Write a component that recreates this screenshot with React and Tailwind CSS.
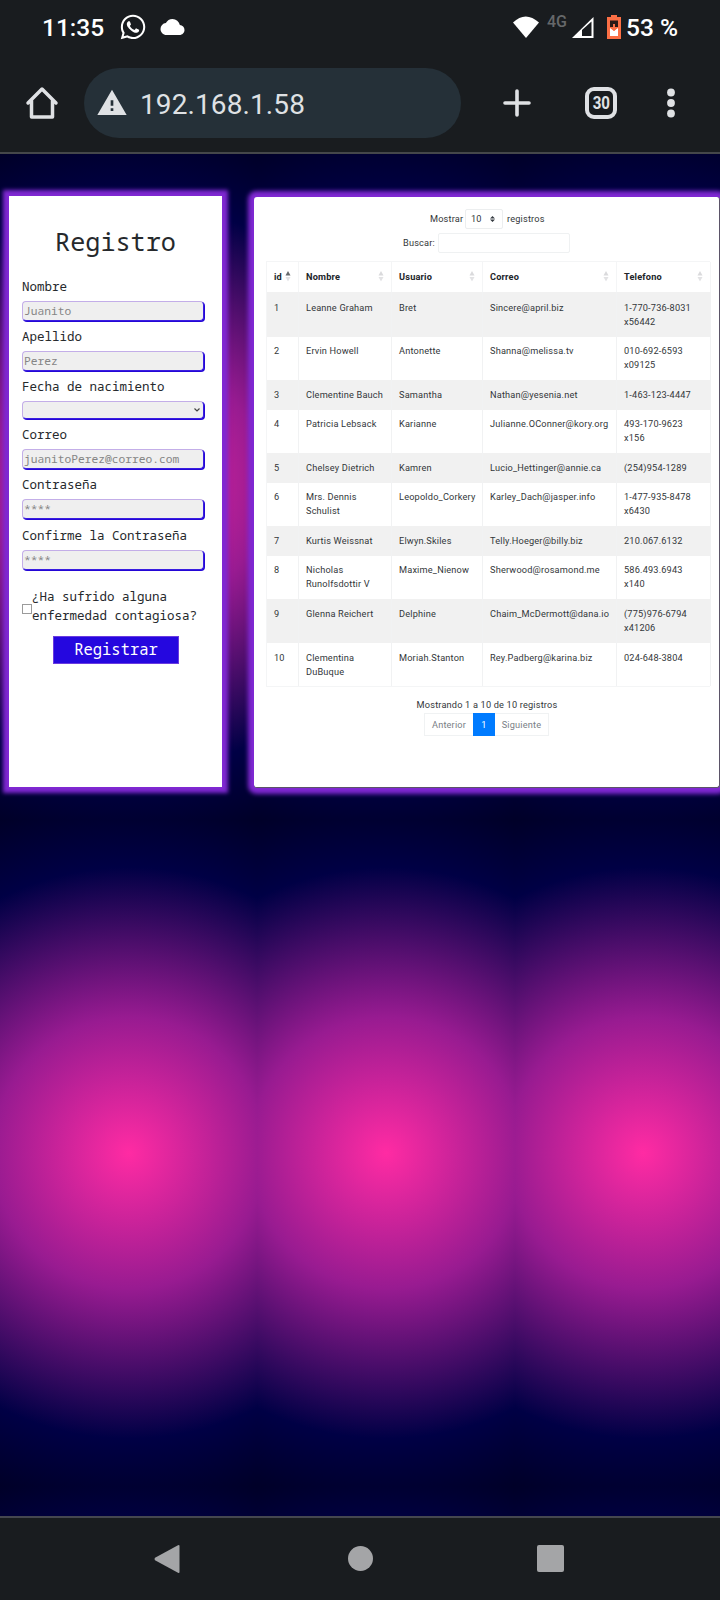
import React from "react";
import { FaWhatsapp } from "react-icons/fa";
import { MdCloud, MdWarning } from "react-icons/md";

const MONO = "font-['Noto_Sans_Mono','DejaVu_Sans_Mono',monospace]";

const rows = [
  { h: "h-[45px] pt-[9px]", c: ["1", "Leanne Graham", "Bret", "Sincere@april.biz", "1-770-736-8031 x56442"] },
  { h: "h-[43px] pt-[7px]", c: ["2", "Ervin Howell", "Antonette", "Shanna@melissa.tv", "010-692-6593 x09125"] },
  { h: "h-[30px] pt-[8px]", c: ["3", "Clementine Bauch", "Samantha", "Nathan@yesenia.net", "1-463-123-4447"] },
  { h: "h-[43px] pt-[7px]", c: ["4", "Patricia Lebsack", "Karianne", "Julianne.OConner@kory.org", "493-170-9623 x156"] },
  { h: "h-[30px] pt-[8px]", c: ["5", "Chelsey Dietrich", "Kamren", "Lucio_Hettinger@annie.ca", "(254)954-1289"] },
  { h: "h-[43px] pt-[7px]", c: ["6", "Mrs. Dennis Schulist", "Leopoldo_Corkery", "Karley_Dach@jasper.info", "1-477-935-8478 x6430"] },
  { h: "h-[30px] pt-[8px]", c: ["7", "Kurtis Weissnat", "Elwyn.Skiles", "Telly.Hoeger@billy.biz", "210.067.6132"] },
  { h: "h-[43px] pt-[7px]", c: ["8", "Nicholas Runolfsdottir V", "Maxime_Nienow", "Sherwood@rosamond.me", "586.493.6943 x140"] },
  { h: "h-[44px] pt-[8px]", c: ["9", "Glenna Reichert", "Delphine", "Chaim_McDermott@dana.io", "(775)976-6794 x41206"] },
  { h: "h-[43px] pt-[8px]", c: ["10", "Clementina DuBuque", "Moriah.Stanton", "Rey.Padberg@karina.biz", "024-648-3804"] },
];

const GRID = "grid grid-cols-[32px_93px_91px_134px_94px]";

function StatusBar() {
  return (
    <div className="flex h-[54px] items-center pl-[42px] text-white">
      <span className="mt-[2px] w-[63px] text-[24.5px] leading-none font-medium whitespace-nowrap">11:35</span>
      <FaWhatsapp className="ml-[14px] h-[28px] w-[28px]" />
      <MdCloud className="ml-[13px] h-[24px] w-[25px]" />
      <svg className="ml-[327px] h-[22px] w-[28px]" viewBox="0 0 28 22">
        <path d="M1 6.500Q13.500-5.500 27 6.500L14 22Z" fill="#fff" />
      </svg>
      <span className="mb-[10px] ml-[7px] w-[23px] text-[16px] leading-none font-medium text-[#66686a]">4G</span>
      <svg className="ml-[1px] h-[23px] w-[24px]" viewBox="0 0 24 23">
        <path d="M1 22L22.500 1V22Z" fill="#fff" />
        <path d="M11 14L20.500 5.500V20H11Z" fill="#191c1f" />
      </svg>
      <svg className="ml-[12px] h-[24px] w-[14px]" viewBox="0 0 14 24">
        <path d="M4 0h6v2h4v22H0V2h4z" fill="#fb6f45" />
        <path d="M3 5.500h8V12H3z" fill="#2a1a16" />
        <path d="M3 13l4 3 4-3v8H3z" fill="#fff" />
        <path d="M6 9h2v3h2.500L7 16l-3.500-4H6z" fill="#fb6f45" />
      </svg>
      <span className="mt-[2px] ml-[5px] text-[24.5px] leading-none font-medium whitespace-nowrap">53 %</span>
    </div>
  );
}

function AddressBar() {
  return (
    <div className="flex h-[98px] items-center text-[#dfe1e4]">
      <svg className="ml-[25px] h-[34px] w-[34px]" viewBox="0 0 34 34" fill="none" stroke="currentColor" strokeWidth="3.500" strokeLinejoin="round" strokeLinecap="round">
        <path d="M3 17L17 3L31 17M6.500 14.500V31H27.500V14.500" />
      </svg>
      <div className="ml-[25px] flex h-[70px] w-[377px] items-center rounded-full bg-[#253038] pl-[12px]">
        <MdWarning className="h-[32px] w-[32px]" />
        <span className="mt-[3px] ml-[12px] text-[28px] leading-none tracking-[0.1px]">192.168.1.58</span>
      </div>
      <svg className="ml-[42px] h-[28px] w-[28px]" viewBox="0 0 28 28" stroke="currentColor" strokeWidth="3.600" strokeLinecap="round">
        <path d="M14 2V26M2 14H26" />
      </svg>
      <div className="ml-[54px] flex h-[32px] w-[32px] items-center justify-center rounded-[9px] border-[4px] border-[#dfe1e4] text-[18px] leading-none font-bold">
        <span className="scale-x-[0.84]">30</span>
      </div>
      <svg className="ml-[50px] h-[30px] w-[8px]" viewBox="0 0 8 30" fill="currentColor">
        <circle cx="4" cy="4.500" r="3.900" />
        <circle cx="4" cy="15" r="3.900" />
        <circle cx="4" cy="25.500" r="3.900" />
      </svg>
    </div>
  );
}

function Field({ label, placeholder, select, gap }) {
  return (
    <div className={gap}>
      <div className="h-[20px] text-[12.5px] leading-[20px] whitespace-nowrap">{label}</div>
      <div
        className={
          "mt-[4px] flex w-[182px] items-center justify-between rounded-[4px] border border-[#c3aee8] bg-[#efefef] pl-[1px] text-[11.250px] leading-none text-[#858585] shadow-[1px_1px_0_0_#2407d6] border-r-[#3a1ee0] border-b-[#3a1ee0] " +
          (select ? "h-[18px]" : "h-[20px]")
        }
      >
        <span>{placeholder}</span>
        {select && (
          <svg className="mr-[3px] h-[4px] w-[6px]" viewBox="0 0 6 4" fill="none" stroke="#444" strokeWidth="1.200">
            <path d="M0.500 0.500L3 3L5.500 0.500" />
          </svg>
        )}
      </div>
    </div>
  );
}

function Registration() {
  return (
    <section className={"h-[591px] w-[213px] shrink-0 bg-white px-[13px] text-[#26292c] shadow-[0_0_4px_6px_#7f28d2] " + MONO}>
      <h1 className="mt-[29px] h-[33px] text-center text-[25.200px] leading-[32px]">Registro</h1>
      <Field label="Nombre" placeholder="Juanito" gap="mt-[19px]" />
      <Field label="Apellido" placeholder="Perez" gap="mt-[6px]" />
      <Field label="Fecha de nacimiento" placeholder="" select gap="mt-[6px]" />
      <Field label="Correo" placeholder="juanitoPerez@correo.com" gap="mt-[6px]" />
      <Field label="Contraseña" placeholder="****" gap="mt-[6px]" />
      <Field label="Confirme la Contraseña" placeholder="****" gap="mt-[7px]" />
      <div className="mt-[17px] flex items-center">
        <span className="mt-[5px] h-[10px] w-[10px] shrink-0 border border-[#9b9b9b]" />
        <span className="text-[12.5px] leading-[19px] whitespace-nowrap">
          ¿Ha sufrido alguna
          <br />
          enfermedad contagiosa?
        </span>
      </div>
      <button className="mt-[11px] ml-[31px] block h-[28px] w-[126px] border border-[#6a3be0] bg-[#2507df] pb-[2px] text-[15.500px] leading-[24px] text-white">
        Registrar
      </button>
    </section>
  );
}

function Sort({ up }) {
  return (
    <svg className="h-[11px] w-[6px]" viewBox="0 0 6 11">
      <path d="M3 0L5.500 4.500H0.500Z" fill={up ? "#66696c" : "#dadadc"} />
      <path d="M3 10.500L5.500 6H0.500Z" fill="#e2e2e4" />
    </svg>
  );
}

function Users() {
  return (
    <section className="mt-px h-[591px] w-[466px] shrink-0 rounded-[3px] border-r border-b border-[#5b5468] bg-white pl-[12px] text-[9.200px] tracking-[0.18px] text-[#33373a] shadow-[0_0_4px_6px_#7f28d2]">
      <div className="mt-[12px] flex h-[20px] items-center pl-[164px]">
        <span className="w-[35px] whitespace-nowrap">Mostrar</span>
        <div className="flex h-[20px] w-[38px] items-center justify-between rounded-[2px] border border-[#eceeef] pr-[7px] pl-[5px]">
          10
          <svg className="h-[6px] w-[5px]" viewBox="0 0 5 6" fill="#343a40">
            <path d="M2.500 0L5 2.500H0ZM2.500 6L5 3.500H0Z" />
          </svg>
        </div>
        <span className="ml-[4px]">registros</span>
      </div>
      <div className="mt-[4px] flex h-[20px] items-center pl-[137px]">
        <span className="w-[35px] whitespace-nowrap">Buscar:</span>
        <div className="h-[20px] w-[132px] rounded-[2px] border border-[#eff1f2]" />
      </div>
      <div className="mt-[8px] w-[444px] border-t border-b border-l border-[#f4f5f6]">
        <div className={"h-[30px] " + GRID}>
          {["id", "Nombre", "Usuario", "Correo", "Telefono"].map((t, i) => (
            <div key={t} className="flex items-center justify-between border-r border-[#f4f5f6] pr-[7px] pb-px pl-[7px] font-bold text-[#212529]">
              {t}
              <Sort up={i === 0} />
            </div>
          ))}
        </div>
        {rows.map((r, i) => (
          <div key={i} className={GRID + (i % 2 ? "" : " bg-[#f1f1f1]")}>
            {r.c.map((t, j) => (
              <div key={j} className={"border-r border-[#f1f2f3] leading-[14px] " + (j === 4 ? "pr-[12px] pl-[7px] " : "pl-[7px] ") + r.h}>
                {t}
              </div>
            ))}
          </div>
        ))}
      </div>
      <div className="mt-[11px] pr-[11px] text-center leading-[14px]">
        <span>Mostrando 1 a 10 de 10 registros</span>
      </div>
      <div className="mt-[1px] ml-[158px] flex h-[23px] w-[125px] border border-[#f0f2f3] leading-[21px] text-[#7a8086]">
        <span className="w-[48px] text-center">Anterior</span>
        <span className="-my-px h-[23px] w-[22px] bg-[#007bff] text-center leading-[23px] text-white">1</span>
        <span className="w-[53px] text-center">Siguiente</span>
      </div>
    </section>
  );
}

export default function App() {
  return (
    <div className="flex h-[1600px] w-[720px] flex-col overflow-hidden bg-[#191c1f] font-[Roboto,sans-serif]">
      <header className="h-[154px] shrink-0 border-b-2 border-[#45474a]">
        <StatusBar />
        <AddressBar />
      </header>
      <main className="flex h-[1362px] shrink-0 items-start gap-[32px] overflow-hidden bg-[radial-gradient(circle,#ff2ba3_0%,#981b91_38%,#000045_80%,#000028_100%)] bg-[length:257.400px_666px] pt-[42px] pl-[9px]">
        <Registration />
        <Users />
      </main>
      <nav className="flex h-[84px] shrink-0 items-center border-t-2 border-[#45474f] pb-px text-[#a4a5a7]">
        <svg className="ml-[154px] h-[30px] w-[26px]" viewBox="0 0 26 30" fill="currentColor">
          <path d="M24 1.200Q25.500 0.500 25.500 2V28Q25.500 29.500 24 28.800L1 16.200Q0 15 1 13.800Z" />
        </svg>
        <span className="ml-[168px] h-[25px] w-[25px] rounded-full bg-current" />
        <span className="ml-[164px] h-[27px] w-[27px] rounded-[2px] bg-current" />
      </nav>
    </div>
  );
}
